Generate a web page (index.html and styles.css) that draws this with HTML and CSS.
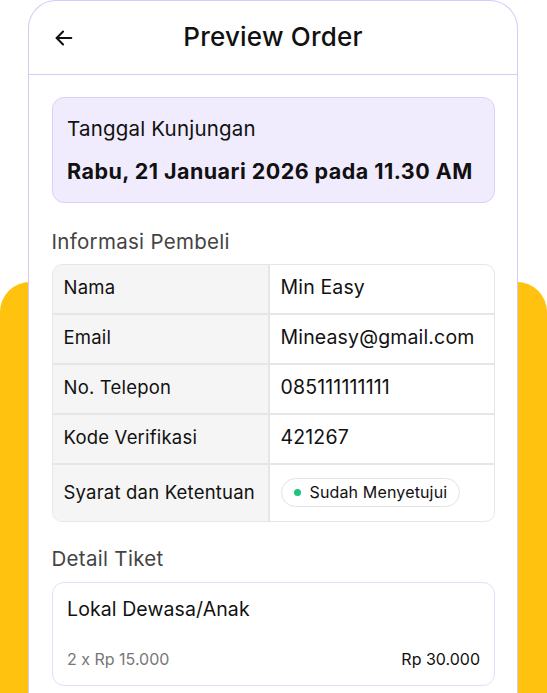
FILE: index.html
```html
<!DOCTYPE html>
<html lang="id">
<head>
<meta charset="utf-8">
<title>Preview Order</title>
<link rel="stylesheet" href="styles.css">
</head>
<body>
<div class="backdrop"></div>
<div class="phone">
  <header class="topbar">
    <span class="back">
      <svg width="22" height="22" viewBox="0 0 24 24" fill="none" stroke="#111" stroke-width="2.2" stroke-linecap="round" stroke-linejoin="round"><path d="M20 12H4"/><path d="M11 5l-7 7 7 7"/></svg>
    </span>
    <h1 class="title">Preview Order</h1>
  </header>
  <main class="content">
    <section class="visit">
      <div class="visit-label">Tanggal Kunjungan</div>
      <div class="visit-date">Rabu, 21 Januari 2026 pada 11.30 AM</div>
    </section>

    <h2 class="section-title">Informasi Pembeli</h2>
    <div class="info-table">
      <div class="row"><div class="key">Nama</div><div class="val">Min Easy</div></div>
      <div class="row"><div class="key">Email</div><div class="val">Mineasy@gmail.com</div></div>
      <div class="row"><div class="key">No. Telepon</div><div class="val">085111111111</div></div>
      <div class="row"><div class="key">Kode Verifikasi</div><div class="val">421267</div></div>
      <div class="row last"><div class="key">Syarat dan Ketentuan</div><div class="val"><span class="badge"><span class="dot"></span>Sudah Menyetujui</span></div></div>
    </div>

    <h2 class="section-title second">Detail Tiket</h2>
    <div class="ticket">
      <div class="ticket-name">Lokal Dewasa/Anak</div>
      <div class="ticket-foot">
        <span class="qty">2 x Rp 15.000</span>
        <span class="total">Rp 30.000</span>
      </div>
    </div>
  </main>
</div>
</body>
</html>
```

FILE: styles.css
```css
* { box-sizing: border-box; }
html, body { margin: 0; padding: 0; }
body {
  position: relative;
  width: 547px;
  height: 693px;
  overflow: hidden;
  background: #ffffff;
  font-family: Inter, "Noto Sans", "Liberation Sans", sans-serif;
  color: #111111;
}
.backdrop {
  position: absolute;
  left: 0;
  right: 0;
  top: 282px;
  bottom: 0;
  background: #FFC20E;
  border-radius: 30px 30px 0 0;
  z-index: 0;
}
.phone {
  position: relative;
  z-index: 1;
  margin: 0 0 0 28px;
  width: 490px;
  height: 693px;
  overflow: hidden;
  background: #ffffff;
  border: 1.5px solid #D9C9F7;
  border-bottom: none;
  border-radius: 28px 28px 0 0;
}
.topbar {
  height: 74px;
  border-bottom: 1.5px solid #D9C9F7;
  display: flex;
  align-items: center;
  justify-content: center;
  position: relative;
}
.back {
  position: absolute;
  left: 24px;
  top: 26px;
  display: flex;
}
.title {
  margin: 0 0 2px;
  font-size: 26px;
  font-weight: 500;
  letter-spacing: 0.2px;
}
.content {
  padding: 22px 22px 0 22.5px;
}
.visit {
  background: #F1ECFD;
  border: 1.5px solid #DCCFF8;
  border-radius: 12px;
  padding: 17px 14px 16px 14.5px;
}
.visit-label {
  font-size: 20.5px;
  line-height: 28px;
  letter-spacing: 0.2px;
  color: #111;
}
.visit-date {
  margin-top: 13px;
  font-size: 21.5px;
  font-weight: 700;
  line-height: 30px;
  letter-spacing: 0.45px;
}
.section-title {
  margin: 26px 0 9px;
  font-size: 20.5px;
  font-weight: 400;
  color: #444444;
  line-height: 26px;
  letter-spacing: 0.3px;
}
.section-title.second { margin: 24px 0 10px; }
.info-table {
  border: 1.5px solid #E6E6E6;
  border-radius: 10px;
  overflow: hidden;
}
.row {
  display: grid;
  grid-template-columns: 217px 1fr;
  height: 50px;
  border-bottom: 2px solid #E6E6E6;
}
.row.last { height: 56px; border-bottom: none; }
.key {
  background: #F5F5F5;
  border-right: 2px solid #E6E6E6;
  padding-left: 11px;
  display: flex;
  align-items: center;
  font-size: 18.5px;
  letter-spacing: 0.2px;
  padding-bottom: 5px;
}
.val {
  padding-left: 11px;
  display: flex;
  align-items: center;
  font-size: 19.5px;
  letter-spacing: 0.15px;
  padding-bottom: 4px;
}
.row.last .key, .row.last .val { padding-bottom: 2px; }
.badge {
  display: inline-flex;
  align-items: center;
  height: 29px;
  padding: 0 12px 0 12px;
  border: 1.5px solid #E3E3E3;
  border-radius: 15px;
  font-size: 16px;
  letter-spacing: 0.15px;
  background: #fff;
}
.dot {
  width: 7px;
  height: 7px;
  border-radius: 50%;
  background: #1DC47A;
  margin-right: 9px;
}
.ticket {
  border: 1.5px solid #E5DDFB;
  border-radius: 12px;
  padding: 12px 14px 15px 14.5px;
}
.ticket-name {
  font-size: 19.5px;
  line-height: 28px;
  letter-spacing: 0.1px;
}
.ticket-foot {
  margin-top: 25px;
  display: flex;
  justify-content: space-between;
  align-items: center;
  font-size: 16px;
  line-height: 22px;
}
.qty { color: #777777; }
.total { color: #111111; }
```
